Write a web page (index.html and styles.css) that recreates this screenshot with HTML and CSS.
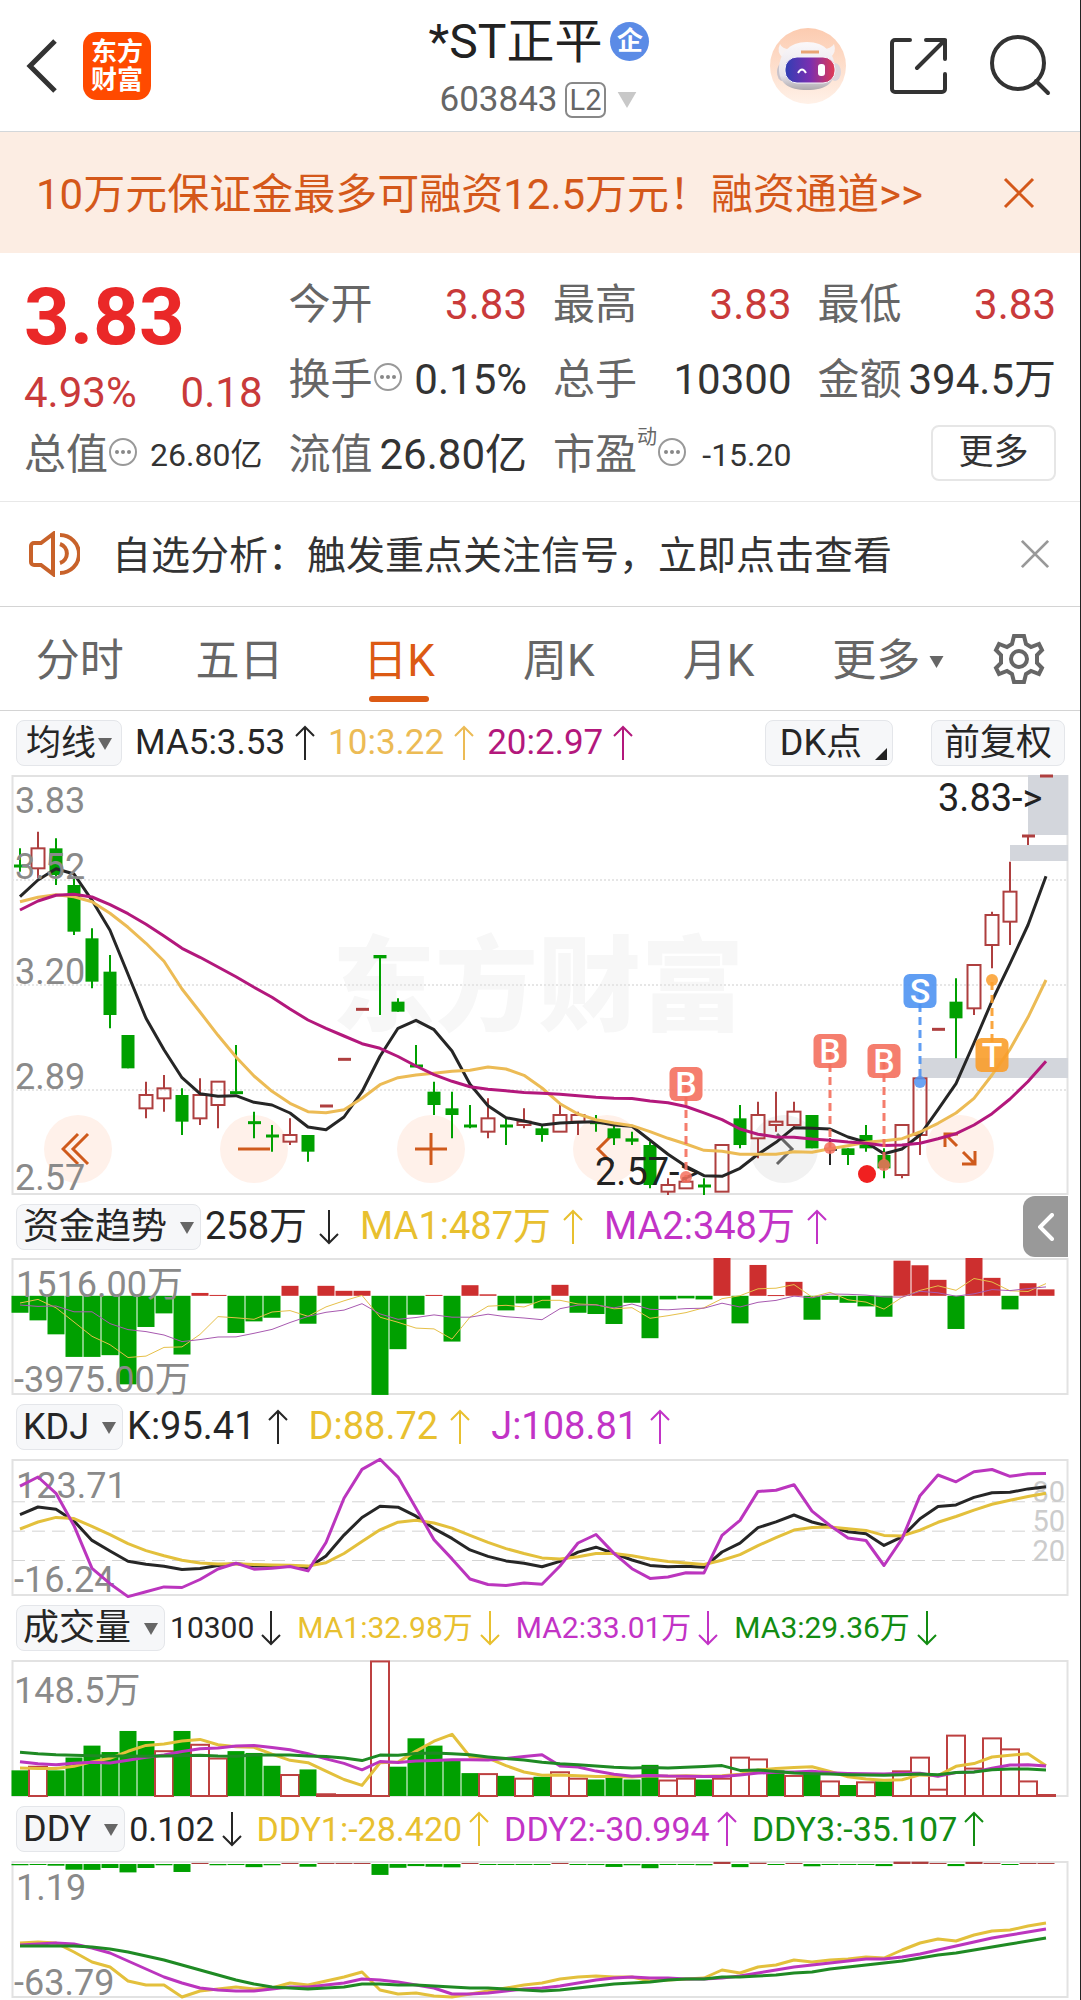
FILE: index.html
```html
<!DOCTYPE html>
<html lang="zh-CN">
<head>
    <meta charset="UTF-8">
    <meta name="viewport" content="width=device-width, initial-scale=1.0">
    <title>*ST正平 603843</title>
    <link rel="stylesheet" href="styles.css">
</head>
<body>
    <svg class="defs" aria-hidden="true">
        <symbol id="up" viewBox="0 0 20 36"><path d="M10 35V2M1 11l9-9 9 9" fill="none" stroke="currentColor" stroke-width="2"/></symbol>
        <symbol id="down" viewBox="0 0 20 36"><path d="M10 1v33M1 25l9 9 9-9" fill="none" stroke="currentColor" stroke-width="2"/></symbol>
        <symbol id="tri" viewBox="0 0 14 12"><path d="M0 0h14L7 12z" fill="currentColor"/></symbol>
        <symbol id="dots" viewBox="0 0 30 30">
            <circle cx="15" cy="15" r="13" fill="none" stroke="#999" stroke-width="2"/>
            <circle cx="9" cy="15" r="2" fill="#888"/><circle cx="15" cy="15" r="2" fill="#888"/><circle cx="21" cy="15" r="2" fill="#888"/>
        </symbol>
        <symbol id="close" viewBox="0 0 32 32"><path d="M2 2l28 28M30 2L2 30" fill="none" stroke="currentColor" stroke-width="3"/></symbol>
    </svg>

    <header class="header">
        <div class="header-left">
            <button class="icon-btn" aria-label="返回">
                <svg width="32" height="54" viewBox="0 0 32 54"><path d="M29 2L4 27l25 25" fill="none" stroke="#333" stroke-width="5"/></svg>
            </button>
            <a class="logo" href="#">东方<br>财富</a>
        </div>
        <div class="header-title">
            <h1>*ST正平<span class="badge">企</span></h1>
            <button class="code">603843<span class="level">L2</span><svg width="22" height="16"><use href="#tri"/></svg></button>
        </div>
        <div class="header-right">
            <button class="icon-btn" aria-label="智能助手">
                <svg width="76" height="76" viewBox="0 0 76 76">
                    <defs>
                        <linearGradient id="halo" x1="0" y1="0" x2="0" y2="1"><stop offset="0" stop-color="#fccbb0"/><stop offset="1" stop-color="#fff1e8"/></linearGradient>
                        <linearGradient id="face"><stop offset="0" stop-color="#2f3fb4"/><stop offset=".5" stop-color="#7a2fb0"/><stop offset="1" stop-color="#e23a52"/></linearGradient>
                        <linearGradient id="shell" x1="0" y1="0" x2="0" y2="1"><stop offset="0" stop-color="#fbf8fa"/><stop offset=".7" stop-color="#e6e3ea"/><stop offset="1" stop-color="#aca7ac"/></linearGradient>
                    </defs>
                    <circle cx="38" cy="38" r="38" fill="url(#halo)"/>
                    <path d="M10 16q-4 8 3 14l8-9q-8 1-11-5zM64 16q3 8-4 14l-9-9q9 1 13-5z" fill="#f8f2f2"/>
                    <ellipse cx="12" cy="44" rx="5" ry="9" fill="#c9c3cb"/><ellipse cx="65" cy="44" rx="6" ry="9" fill="#dcd6dc"/>
                    <path d="M37 14c18 0 28 12 28 27 0 14-9 21-28 21S9 55 9 41c0-15 10-27 28-27z" fill="url(#shell)"/>
                    <rect x="15" y="29" width="50" height="26" rx="12" fill="url(#face)" stroke="#f4f2f8" stroke-width="1"/>
                    <path d="M28 45q4-7 8 0" fill="none" stroke="#fff" stroke-width="2"/>
                    <rect x="48" y="36" width="7" height="12" rx="3" fill="#fff"/>
                    <path d="M31 24h18" stroke="#e9a574" stroke-width="3"/>
                </svg>
            </button>
            <button class="icon-btn" aria-label="分享">
                <svg width="58" height="58" viewBox="0 0 58 58" fill="none" stroke="#333" stroke-width="4" stroke-linecap="round" stroke-linejoin="round"><path d="M21 3H6a3 3 0 0 0-3 3v46a3 3 0 0 0 3 3h47a3 3 0 0 0 3-3V37M37 3h19v19M56 3L28 31"/></svg>
            </button>
            <button class="icon-btn" aria-label="搜索">
                <svg width="62" height="62" viewBox="0 0 62 62" fill="none" stroke="#333" stroke-width="4" stroke-linecap="round"><circle cx="28" cy="28" r="26"/><path d="M46 46l12 12"/></svg>
            </button>
        </div>
    </header>

    <div class="banner">
        <a href="#">10万元保证金最多可融资12.5万元！融资通道&gt;&gt;</a>
        <button class="icon-btn" aria-label="关闭"><svg width="32" height="32"><use href="#close"/></svg></button>
    </div>

    <section class="quote">
        <div class="price">
            <strong>3.83</strong>
            <p><span>4.93%</span><span>0.18</span></p>
        </div>
        <div class="item"><span>今开</span><b class="red">3.83</b></div>
        <div class="item"><span>最高</span><b class="red">3.83</b></div>
        <div class="item"><span>最低</span><b class="red">3.83</b></div>
        <div class="item"><span>换手<svg class="info"><use href="#dots"/></svg></span><b>0.15%</b></div>
        <div class="item"><span>总手</span><b>10300</b></div>
        <div class="item"><span>金额</span><b>394.5万</b></div>
        <div class="item"><span>总值<svg class="info"><use href="#dots"/></svg></span><b class="small">26.80亿</b></div>
        <div class="item"><span>流值</span><b>26.80亿</b></div>
        <div class="item"><span>市盈<sup>动</sup><svg class="info"><use href="#dots"/></svg></span><b class="small">-15.20</b></div>
        <div class="item end"><button class="more-btn">更多</button></div>
    </section>

    <div class="notice">
        <svg width="52" height="46" viewBox="0 0 52 46" fill="none" stroke="#c8622a" stroke-width="4"><path d="M25 3v40L13 34H6a3 3 0 0 1-3-3V15a3 3 0 0 1 3-3h7z"/><path d="M32 4a19 19 0 0 1 0 38M32 13a10 10 0 0 1 0 19"/></svg>
        <a href="#">自选分析：触发重点关注信号，立即点击查看</a>
        <button class="icon-btn" aria-label="关闭"><svg width="30" height="30"><use href="#close"/></svg></button>
    </div>

    <nav class="tabs">
        <button>分时</button>
        <button>五日</button>
        <button class="active">日K</button>
        <button>周K</button>
        <button>月K</button>
        <button class="more">更多<svg width="15" height="12"><use href="#tri"/></svg></button>
        <button class="gear" aria-label="设置">
            <svg width="52" height="52" viewBox="-26 -26 52 52" fill="none" stroke="#666" stroke-width="4"><path d="M-5-23H5L7-15L12-12L20-15L23-9L18-4V4L23 9L20 15L12 12L7 15L5 23H-5L-7 15L-12 12L-20 15L-23 9L-18 4V-4L-23-9L-20-15L-12-12L-7-15Z"/><circle r="8"/></svg>
        </button>
    </nav>

    <main>
        <div class="legend main-legend">
            <button class="pick">均线<svg width="14" height="12"><use href="#tri"/></svg></button>
            <span>MA5:3.53<svg class="arrow"><use href="#up"/></svg></span>
            <span class="gold">10:3.22<svg class="arrow"><use href="#up"/></svg></span>
            <span class="plum">20:2.97<svg class="arrow"><use href="#up"/></svg></span>
            <div class="legend-right">
                <button class="pick corner">DK点</button>
                <button class="pick">前复权</button>
            </div>
        </div>
        <div class="chart">
            <div class="tools">
                <button aria-label="最左"><svg width="34" height="34" viewBox="0 0 34 34"><path d="M17 2L2 17l15 15M27 2L12 17l15 15"/></svg></button>
                <button aria-label="缩小"><svg width="34" height="34" viewBox="0 0 34 34"><path d="M1 17h32"/></svg></button>
                <button aria-label="放大"><svg width="34" height="34" viewBox="0 0 34 34"><path d="M1 17h32M17 1v32"/></svg></button>
                <button aria-label="左移"><svg width="34" height="34" viewBox="0 0 34 34"><path d="M23 2L8 17l15 15"/></svg></button>
                <button class="off" aria-label="右移"><svg width="34" height="34" viewBox="0 0 34 34"><path d="M10 2l15 15-15 15"/></svg></button>
                <button aria-label="全屏"><svg width="34" height="34" viewBox="0 0 34 34"><path d="M2 15V2h13M2 2l12 12M32 19v13H19M32 32L20 20"/></svg></button>
            </div>
            <svg id="kline" viewBox="0 0 1056 420"></svg>
        </div>

        <div class="legend fund-legend">
            <button class="pick">资金趋势<svg width="14" height="12"><use href="#tri"/></svg></button>
            <span>258万<svg class="arrow"><use href="#down"/></svg></span>
            <span class="yellow">MA1:487万<svg class="arrow"><use href="#up"/></svg></span>
            <span class="pink">MA2:348万<svg class="arrow"><use href="#up"/></svg></span>
            <button class="drawer" aria-label="展开"><svg width="16" height="28" viewBox="0 0 16 28"><path d="M14 2L2 14l12 12" fill="none" stroke="#fff" stroke-width="4" stroke-linecap="round"/></svg></button>
        </div>
        <div class="chart"><svg id="fund" viewBox="0 0 1056 137"></svg></div>

        <div class="legend kdj-legend">
            <button class="pick">KDJ<svg width="14" height="12"><use href="#tri"/></svg></button>
            <span>K:95.41<svg class="arrow"><use href="#up"/></svg></span>
            <span class="yellow">D:88.72<svg class="arrow"><use href="#up"/></svg></span>
            <span class="pink">J:108.81<svg class="arrow"><use href="#up"/></svg></span>
        </div>
        <div class="chart"><svg id="kdj" viewBox="0 0 1056 137"></svg></div>

        <div class="legend vol-legend">
            <button class="pick">成交量<svg width="14" height="12"><use href="#tri"/></svg></button>
            <span>10300<svg class="arrow"><use href="#down"/></svg></span>
            <span class="yellow">MA1:32.98万<svg class="arrow"><use href="#down"/></svg></span>
            <span class="pink">MA2:33.01万<svg class="arrow"><use href="#down"/></svg></span>
            <span class="green">MA3:29.36万<svg class="arrow"><use href="#down"/></svg></span>
        </div>
        <div class="chart"><svg id="vol" viewBox="0 0 1056 137"></svg></div>

        <div class="legend ddy-legend">
            <button class="pick">DDY<svg width="14" height="12"><use href="#tri"/></svg></button>
            <span>0.102<svg class="arrow"><use href="#down"/></svg></span>
            <span class="yellow">DDY1:-28.420<svg class="arrow"><use href="#up"/></svg></span>
            <span class="pink">DDY2:-30.994<svg class="arrow"><use href="#up"/></svg></span>
            <span class="green">DDY3:-35.107<svg class="arrow"><use href="#up"/></svg></span>
        </div>
        <div class="chart"><svg id="ddy" viewBox="0 0 1056 137"></svg></div>
    </main>

    <script src="chart.js"></script>
</body>
</html>
```

FILE: styles.css
```css
body {
    margin: 0;
    min-height: 100vh;
    box-sizing: border-box;
    border-right: 1px solid #222;
    background-color: #fff;
    color: #333;
    font-family: Roboto, "Noto Sans CJK SC", sans-serif;
    line-height: 1.2;
    overflow-x: hidden;
}
button {
    padding: 0;
    border: none;
    background: none;
    color: inherit;
    font: inherit;
    cursor: pointer;
}
a {
    color: inherit;
    text-decoration: none;
}
svg {
    display: block;
    flex: none;
}
.defs {
    position: absolute;
    width: 0;
    height: 0;
}

/* 顶部 */
.header {
    display: grid;
    grid-template-columns: 1fr auto 1fr;
    align-items: center;
    height: 132px;
    padding: 0 28px 0 26px;
    border-bottom: 1px solid #d3d7da;
    box-sizing: border-box;
}
.header-left,
.header-right {
    display: flex;
    align-items: center;
    gap: 25px;
}
.header-right {
    justify-content: flex-end;
    gap: 43px;
}
.logo {
    width: 68px;
    height: 68px;
    padding-top: 6px;
    box-sizing: border-box;
    border-radius: 14px;
    background-color: #ff4a00;
    color: #fff;
    font-size: 26px;
    font-weight: 700;
    line-height: 28px;
    text-align: center;
}
.header-title {
    display: flex;
    flex-direction: column;
    align-items: center;
    gap: 4px;
    padding-top: 4px;
}
h1 {
    display: flex;
    align-items: center;
    gap: 8px;
    margin: 0;
    color: #222;
    font-size: 48px;
    font-weight: 400;
    line-height: 60px;
}
.badge {
    width: 39px;
    height: 39px;
    border-radius: 50%;
    background-color: #5b8be6;
    color: #fff;
    font-size: 26px;
    font-weight: 700;
    line-height: 38px;
    text-align: center;
}
.code {
    display: flex;
    align-items: center;
    gap: 7px;
    color: #666;
    font-size: 35px;
    line-height: 48px;
}
.code svg {
    color: #c8c8c8;
    margin-left: 3px;
}
.level {
    padding: 0 3px;
    border: 2px solid #888;
    border-radius: 7px;
    font-size: 29px;
    line-height: 32px;
}

/* 融资横幅 */
.banner {
    display: flex;
    align-items: center;
    justify-content: space-between;
    height: 121px;
    padding: 0 45px 0 36px;
    background-color: #fcede3;
    color: #d4581a;
    font-size: 42px;
}
.banner a {
    padding-top: 6px;
}

/* 行情 */
.quote {
    display: grid;
    grid-template-columns: repeat(4, minmax(0, 1fr));
    grid-template-rows: repeat(3, 75px);
    column-gap: 26px;
    padding: 15px 24px 8px;
    border-bottom: 1px solid #e8e8e8;
    font-size: 42px;
}
.price {
    grid-row: span 2;
    padding-top: 12px;
    color: #c93a3a;
}
.price strong {
    display: block;
    color: #ea2828;
    font-size: 80px;
    font-weight: 700;
    line-height: 75px;
}
.price p {
    display: flex;
    justify-content: space-between;
    margin: 0;
    line-height: 75px;
}
.item {
    display: flex;
    align-items: center;
    justify-content: space-between;
    white-space: nowrap;
}
.item span {
    display: flex;
    align-items: center;
    color: #666;
}
.item b {
    font-weight: 400;
}
.item .red {
    color: #c93a3a;
}
.item .small {
    font-size: 32px;
}
.item sup {
    align-self: flex-start;
    font-size: 20px;
    line-height: 14px;
}
.item.end {
    justify-content: flex-end;
}
.info {
    width: 30px;
    height: 30px;
    margin-bottom: 6px;
}
.more-btn {
    width: 125px;
    height: 56px;
    margin-bottom: 6px;
    border: 2px solid #e6e6e6;
    border-radius: 8px;
    font-size: 35px;
}

/* 公告 */
.notice {
    display: flex;
    align-items: center;
    gap: 32px;
    height: 104px;
    padding: 0 30px 0 28px;
    border-bottom: 1px solid #d4d4d4;
    font-size: 39px;
}
.notice a {
    padding-top: 4px;
}
.notice .icon-btn {
    margin-left: auto;
    color: #999;
}

/* 周期 */
.tabs {
    display: grid;
    grid-template-columns: repeat(6, minmax(0, 1fr)) 122px;
    height: 103px;
    border-bottom: 1px solid #d4d4d4;
    color: #666;
    font-size: 44px;
}
.tabs button {
    position: relative;
    display: flex;
    align-items: center;
    justify-content: center;
    padding-top: 6px;
}
.tabs .active {
    color: #dc5a14;
}
.tabs .active::after {
    content: "";
    position: absolute;
    bottom: 8px;
    width: 60px;
    height: 6px;
    border-radius: 3px;
    background-color: #dc5a14;
}
.tabs .more {
    gap: 9px;
    padding-left: 20px;
}
.tabs .gear {
    padding-top: 0;
}

/* 指标图例 */
.legend {
    display: flex;
    align-items: center;
    height: 64px;
    padding: 0 12px 0 16px;
    color: #262626;
    white-space: nowrap;
}
.legend span {
    display: flex;
    align-items: center;
}
.pick {
    display: flex;
    align-items: center;
    height: 46px;
    padding: 2px 6px 0;
    border: 1px solid #e4e6ea;
    border-radius: 8px;
    background-color: #f6f7f9;
    font-size: 36px;
}
.pick svg {
    margin-left: 13px;
    color: #666;
}
.arrow {
    width: 20px;
    height: 36px;
}
.main-legend {
    gap: 13px;
    font-size: 35px;
}
.main-legend span {
    gap: 10px;
}
.main-legend .pick {
    padding: 2px 9px 0;
    font-size: 35px;
}
.main-legend .pick svg {
    margin-left: 2px;
}
.legend-right {
    display: flex;
    gap: 38px;
    margin-left: auto;
    margin-right: 3px;
}
.main-legend .legend-right .pick {
    padding: 2px 12px 0;
    font-size: 36px;
}
.main-legend .legend-right .corner {
    position: relative;
    padding: 2px 30px 0 14px;
}
.corner::after {
    content: "";
    position: absolute;
    right: 5px;
    bottom: 5px;
    border: 6px solid #222;
    border-top-color: transparent;
    border-left-color: transparent;
}
.fund-legend,
.kdj-legend {
    gap: 21px;
    font-size: 38px;
}
.fund-legend {
    height: 63px;
}
.fund-legend .pick,
.kdj-legend .pick {
    margin-right: -17px;
}
.fund-legend span,
.kdj-legend span {
    gap: 12px;
}
.vol-legend {
    gap: 16px;
    font-size: 30px;
}
.ddy-legend {
    gap: 15px;
    font-size: 34px;
}
.vol-legend .pick,
.ddy-legend .pick {
    margin-right: -11px;
}
.vol-legend span,
.ddy-legend span {
    gap: 7px;
}
.gold { color: #ecbb55; }
.plum { color: #b3187c; }
.yellow { color: #e8c02f; }
.pink { color: #c233c6; }
.green { color: #128c12; }
.drawer {
    display: flex;
    align-items: center;
    justify-content: center;
    width: 45px;
    height: 61px;
    margin-left: auto;
    border-radius: 12px 0 0 12px;
    background-color: #999;
}

/* 图表 */
.chart {
    position: relative;
    margin: 0 12px;
}
.chart > svg {
    position: relative;
    width: 100%;
    height: auto;
    overflow: visible;
    pointer-events: none;
}
.tools {
    position: absolute;
    right: 7%;
    bottom: 12px;
    left: 3%;
    display: flex;
    justify-content: space-between;
}
.tools button {
    display: flex;
    align-items: center;
    justify-content: center;
    width: 68px;
    height: 68px;
    border-radius: 50%;
    background-color: #fff1ea;
}
.tools path {
    fill: none;
    stroke: #cf5a1c;
    stroke-width: 3;
}
.tools .off {
    background-color: #f2f2f2;
}
.tools .off path {
    stroke: #666;
}
.axis {
    fill: #8a8a8a;
    font-size: 36px;
}
.level-axis {
    fill: #ccc;
    font-size: 29px;
    text-anchor: end;
}
.peak {
    fill: #222;
    font-size: 38px;
}
.watermark {
    fill: #f7f7f7;
    font-size: 103px;
    font-weight: 900;
}
.mark {
    fill: #fff;
    font-size: 34px;
    font-weight: 500;
    text-anchor: middle;
}
```

FILE: chart.js
```javascript
const RED = '#ae3f3f';
const SOLID_RED = '#cd2f2f';
const GREEN = '#00a000';
const DARK = '#262626';
const GOLD = '#ecbb55';
const YELLOW = '#e3c03c';
const PINK = '#bb35be';
const PLUM = '#b3187c';
const DEEP = '#1f8a24';

// [开, 高, 低, 收]
const days = [
    [3.56, 3.61, 3.54, 3.56], [3.55, 3.66, 3.52, 3.61], [3.61, 3.64, 3.50, 3.53], [3.50, 3.52, 3.35, 3.36],
    [3.34, 3.37, 3.19, 3.21], [3.24, 3.29, 3.07, 3.11], [3.05, 3.05, 2.95, 2.95], [2.83, 2.91, 2.80, 2.87],
    [2.86, 2.93, 2.82, 2.89], [2.87, 2.89, 2.75, 2.79], [2.80, 2.92, 2.78, 2.87], [2.84, 2.91, 2.77, 2.91],
    [2.88, 3.02, 2.88, 2.88], [2.79, 2.82, 2.74, 2.79], [2.75, 2.78, 2.70, 2.75], [2.73, 2.80, 2.72, 2.75],
    [2.75, 2.75, 2.67, 2.70], [2.84, 2.84, 2.84, 2.84], [2.98, 2.98, 2.98, 2.98], [3.13, 3.13, 3.13, 3.13],
    [3.29, 3.29, 3.11, 3.28], [3.15, 3.16, 3.12, 3.12], [2.96, 3.02, 2.96, 2.96], [2.88, 2.91, 2.81, 2.84],
    [2.83, 2.88, 2.74, 2.81], [2.78, 2.84, 2.77, 2.78], [2.76, 2.86, 2.74, 2.80], [2.78, 2.80, 2.72, 2.78],
    [2.78, 2.83, 2.77, 2.79], [2.77, 2.78, 2.73, 2.75], [2.76, 2.84, 2.76, 2.81], [2.79, 2.82, 2.75, 2.81],
    [2.79, 2.81, 2.76, 2.79], [2.77, 2.78, 2.72, 2.74], [2.74, 2.76, 2.72, 2.73], [2.72, 2.73, 2.59, 2.60],
    [2.58, 2.62, 2.57, 2.60], [2.59, 2.63, 2.59, 2.61], [2.60, 2.62, 2.57, 2.60], [2.58, 2.72, 2.58, 2.72],
    [2.80, 2.84, 2.71, 2.72], [2.74, 2.85, 2.68, 2.81], [2.78, 2.88, 2.76, 2.79], [2.78, 2.85, 2.77, 2.82],
    [2.81, 2.81, 2.71, 2.71], [2.71, 2.74, 2.66, 2.71], [2.71, 2.71, 2.66, 2.69], [2.75, 2.78, 2.70, 2.71],
    [2.69, 2.71, 2.62, 2.65], [2.63, 2.78, 2.62, 2.78], [2.75, 2.92, 2.69, 2.92], [3.07, 3.07, 3.07, 3.07],
    [3.15, 3.22, 2.98, 3.10], [3.13, 3.26, 3.11, 3.26], [3.32, 3.42, 3.25, 3.41], [3.39, 3.57, 3.32, 3.48],
    [3.65, 3.65, 3.62, 3.65], [3.83, 3.83, 3.83, 3.83]
];

// 资金趋势，单位：万
const funds = [-680, -985, -1545, -2450, -2450, -2380, -3550, -1250, -705, -2355, 115, 35, -1490, -1025, -880, 400,
    -1120, 400, 200, 200, -3975, -2140, -760, 35, -1835, 425, 60, -585, -305, -505, 440, -680, -730, -1130, -280,
    -1700, -145, -105, -145, 1516, -1105, 1237, 30, 560, -960, -160, -280, -425, -840, 1410, 1225, 640, -1330, 1516,
    720, -545, 505, 258];

// 成交量，单位：万
const volumes = [28, 33, 28, 42, 55, 48, 71, 60, 50, 71, 57, 42, 49, 47, 33, 24, 29, 3, 1, 1, 148, 32, 63, 55, 39,
    25, 25, 22, 20, 21, 27, 20, 18, 20, 18, 34, 18, 20, 18, 20, 43, 41, 28, 23, 25, 17, 12, 16, 16, 28, 43, 8, 67,
    31, 64, 52, 17, 1];

const ddy = [-0.6, -0.3, -0.8, -2.7, -2.8, -1.9, -4, -1.9, -0.6, -3.8, 0.5, -0.6, -0.5, -1.5, -0.6, 0.5, -1.3, 0.3,
    0.3, 0.3, -5.2, -1.8, -1, -1.3, -1.6, 0.4, -0.3, -0.3, -0.3, -0.3, 0.5, -0.3, -0.5, -1.4, -0.6, -2, -0.4, -0.4,
    -0.6, 1, -1.5, 0.6, -0.3, 0.4, -1.1, -0.4, -0.4, -0.4, -1, 1.1, 1.1, 0.5, -1, 1, 0.4, -0.4, 0.4, 0.1];
const ddy1 = [82, 81, 82, 91, 101, 106, 120, 124, 124, 136, 130, 128, 126, 128, 127, 122, 124, 120, 116, 111, 129,
    133, 132, 135, 136, 133, 130, 127, 124, 122, 118, 116, 115, 116, 116, 120, 119, 118, 117, 109, 112, 106, 104,
    99, 101, 99, 98, 96, 97, 89, 82, 78, 80, 74, 70, 69, 65, 62];
const ddy2 = [84, 83, 82, 83, 87, 92, 100, 108, 116, 122, 127, 129, 130, 130, 128, 126, 126, 124, 122, 118, 119,
    121, 124, 127, 133, 133, 132, 130, 128, 127, 125, 122, 119, 117, 116, 117, 117, 118, 118, 117, 115, 112, 109,
    106, 104, 102, 100, 98, 98, 96, 93, 89, 85, 81, 77, 74, 71, 68];
const ddy3 = [85, 85, 85, 85, 86, 88, 91, 95, 99, 104, 109, 114, 119, 123, 126, 127, 128, 127, 126, 123, 123, 124,
    124, 125, 126, 127, 127, 128, 129, 130, 129, 127, 125, 123, 122, 121, 119, 118, 118, 116, 116, 115, 114, 112,
    111, 108, 106, 104, 102, 100, 97, 94, 92, 89, 86, 83, 80, 77];

const closes = days.map(d => d[3]);
const x = i => 8 + 18 * i;

// n 日均值，head 是窗口不足时的前几个值
function average(list, n, head) {
    return list.map((v, i) => {
        if (i < n - 1) return head[i];
        return list.slice(i - n + 1, i + 1).reduce((a, b) => a + b) / n;
    });
}
function rect(left, top, w, h, fill, stroke) {
    return `<rect x="${left}" y="${top}" width="${w}" height="${h}" fill="${fill}"` +
        (stroke ? ` stroke="${stroke}" stroke-width="2"` : '') + '/>';
}
function line(x1, y1, x2, y2, color, extra = '') {
    return `<path d="M${x1} ${y1}L${x2} ${y2}" stroke="${color}" stroke-width="2" ${extra}/>`;
}
function curve(list, y, color, width = 3) {
    const points = list.map((v, i) => x(i) + ',' + y(v).toFixed(1)).join(' ');
    return `<polyline points="${points}" fill="none" stroke="${color}" stroke-width="${width}" stroke-linejoin="round"/>`;
}
function text(cls, left, base, value) {
    return `<text class="${cls}" x="${left}" y="${base}">${value}</text>`;
}
function frame(h) {
    return `<rect x="0.5" y="1" width="1055" height="${h - 2}" fill="none" stroke="#e2e2e2" stroke-width="2"/>`;
}
function rising(i) {
    return i > 0 && closes[i] >= closes[i - 1];
}

function drawKline() {
    const y = p => (3.83 - p) / 0.003;
    let s = text('watermark', 320, 248, '东方财富') + frame(420);
    [105, 210, 315].forEach(v => s += line(0, v, 1056, v, '#e6e6e6', 'stroke-dasharray="2 2"'));
    s += rect(1016, 0, 40, 60, '#d3d6dc') + rect(998, 70, 58, 16, '#d3d6dc') + rect(908, 283, 148, 20, '#d3d6dc');

    days.forEach(([open, high, low, close], i) => {
        const c = x(i);
        if (open === close) {
            const color = i === 0 || close < closes[i - 1] ? GREEN : close > closes[i - 1] ? RED : DARK;
            s += line(c, y(high), c, y(low), color) + line(c - 6, y(close) + 1, c + 7, y(close) + 1, color, 'style="stroke-width:3"');
        } else if (close > open) {
            s += line(c, y(high), c, y(close), RED) + line(c, y(open), c, y(low), RED);
            s += rect(c - 6.5, y(close), 13, Math.max(y(open) - y(close), 3), 'none', RED);
        } else {
            s += line(c, y(high), c, y(low), GREEN);
            s += rect(c - 6.5, y(open), 13, y(close) - y(open), GREEN);
        }
    });

    s += curve(average(closes, 5, [3.465, 3.515, 3.549, 3.533]), y, DARK);
    s += curve(average(closes, 10, [3.45, 3.463, 3.471, 3.465, 3.45, 3.415, 3.373, 3.325, 3.271]), y, GOLD);
    s += curve(average(closes, 20, [3.425, 3.452, 3.469, 3.472, 3.464, 3.441, 3.414, 3.382, 3.347, 3.31, 3.283,
        3.254, 3.225, 3.193, 3.163, 3.128, 3.095, 3.07, 3.047]), y, PLUM);

    s += text('axis', 3, 38, '3.83') + text('axis', 3, 104, '3.52') + text('axis', 3, 209, '3.20');
    s += text('axis', 3, 314, '2.89') + text('axis', 3, 415, '2.57');
    s += text('peak', 926, 36, '3.83-&gt;') + text('peak', 583, 410, '2.57-&gt;');

    // 买卖点：[序号, 字母, 方块中心, 圆点, 颜色]
    [[37, 'B', 309, 402, '#f4705e'], [45, 'B', 276, 373, '#f4705e'], [48, 'B', 286, 390, '#f4705e'],
        [50, 'S', 216, 307, '#4f93f2'], [54, 'T', 280, 205, '#fa9d2a']].forEach(([i, letter, box, dot, color]) => {
        const c = x(i);
        s += `<g opacity="0.9">${line(c, box, c, dot, color, 'stroke-dasharray="8 5" style="stroke-width:3"')}</g>`;
        s += `<circle cx="${c}" cy="${dot}" r="6" fill="${color}" opacity="0.85"/>`;
        s += `<rect x="${c - 16.5}" y="${box - 17}" width="33" height="34" rx="6" fill="${color}" opacity="0.9"/>`;
        s += text('mark', c, box + 12, letter);
    });
    s += '<circle cx="855" cy="399" r="9" fill="#f02020"/>';
    document.getElementById('kline').innerHTML = s;
}

function drawFund() {
    const y = v => (1516 - v) / 40.1;
    const zero = y(0);
    let s = frame(137);
    funds.forEach((v, i) => {
        s += v > 0 ? rect(x(i) - 8.5, y(v), 17, Math.max(zero - y(v), 1), SOLID_RED) : rect(x(i) - 8.5, zero, 17, y(v) - zero, GREEN);
    });
    s += curve(average(funds, 5, [-290, -145, -480, -1050]), y, '#e6c04a', 1);
    s += curve(average(funds, 10, [-370, -425, -410, -640, -640, -1115, -1355, -1435, -1570]), y, '#a85ab0', 1);
    s += text('axis', 4, 39, '1516.00万') + text('axis', 2, 134, '-3975.00万');
    document.getElementById('fund').innerHTML = s;
}

function drawKdj() {
    const y = v => (123.71 - v) / 1.0215;
    const k = [66.8, 74.7, 72.3, 60.4, 40.6, 29.7, 19.2, 16.1];
    const d = [52.2, 59.4, 64.1, 62.8, 54.9, 46.4, 37.2, 30.1];
    for (let i = 8; i < days.length; i++) {
        const span = days.slice(i - 8, i + 1);
        const low = Math.min(...span.map(v => v[2]));
        const high = Math.max(...span.map(v => v[1]));
        const rsv = (closes[i] - low) / (high - low) * 100;
        k.push((k[i - 1] * 2 + rsv) / 3);
        d.push((d[i - 1] * 2 + k[i]) / 3);
    }
    let s = frame(137);
    [80, 50, 20].forEach(v => s += line(0, y(v), 1056, y(v), '#d4d4d4', 'stroke-dasharray="13 7" style="stroke-width:1"'));
    s += text('level-axis', 1053, 43, '80') + text('level-axis', 1053, 72, '50') + text('level-axis', 1053, 102, '20');
    s += text('axis', 4, 39, '123.71') + text('axis', 2, 133, '-16.24');
    s += curve(k, y, DARK) + curve(d, y, YELLOW) + curve(k.map((v, i) => 3 * v - 2 * d[i]), y, PINK);
    document.getElementById('kdj').innerHTML = s;
}

function drawVolume() {
    const y = v => 136 - v * 0.916;
    let s = frame(137);
    volumes.forEach((v, i) => {
        if (rising(i)) {
            const top = Math.min(y(v) + 1, 135);
            s += rect(x(i) - 9, top, 18, 136 - top, '#fff', '#bd4040');
        } else {
            s += rect(x(i) - 8.5, y(v), 17, 136 - y(v), GREEN);
        }
    });
    s += curve(average(volumes, 5, [30.6, 30, 30, 32.4]), y, YELLOW);
    s += curve(average(volumes, 10, [37.5, 35.3, 34.2, 35.7, 36.8, 36, 39, 42.2, 44.8]), y, PINK);
    s += curve(average(volumes, 20, [47.7, 46.2, 45.1, 44.4, 44, 43.8, 43.6, 43.3, 43.7, 44, 44.4, 43.7, 43.3, 44.8,
        44.8, 44.8, 43.7, 43, 41.5]), y, DEEP);
    s += text('axis', 2, 43, '148.5万');
    document.getElementById('vol').innerHTML = s;
}

function drawDdy() {
    let s = frame(137);
    ddy.forEach((v, i) => {
        const h = Math.max(Math.abs(v) * 2.1, 1);
        s += v > 0 ? rect(x(i) - 8.5, 3 - h, 17, h, RED) : rect(x(i) - 8.5, 3, 17, h, GREEN);
    });
    s += text('axis', 4, 39, '1.19') + text('axis', 2, 134, '-63.79');
    s += curve(ddy1, v => v, YELLOW) + curve(ddy2, v => v, PINK) + curve(ddy3, v => v, DEEP);
    document.getElementById('ddy').innerHTML = s;
}

drawKline();
drawFund();
drawKdj();
drawVolume();
drawDdy();
```
